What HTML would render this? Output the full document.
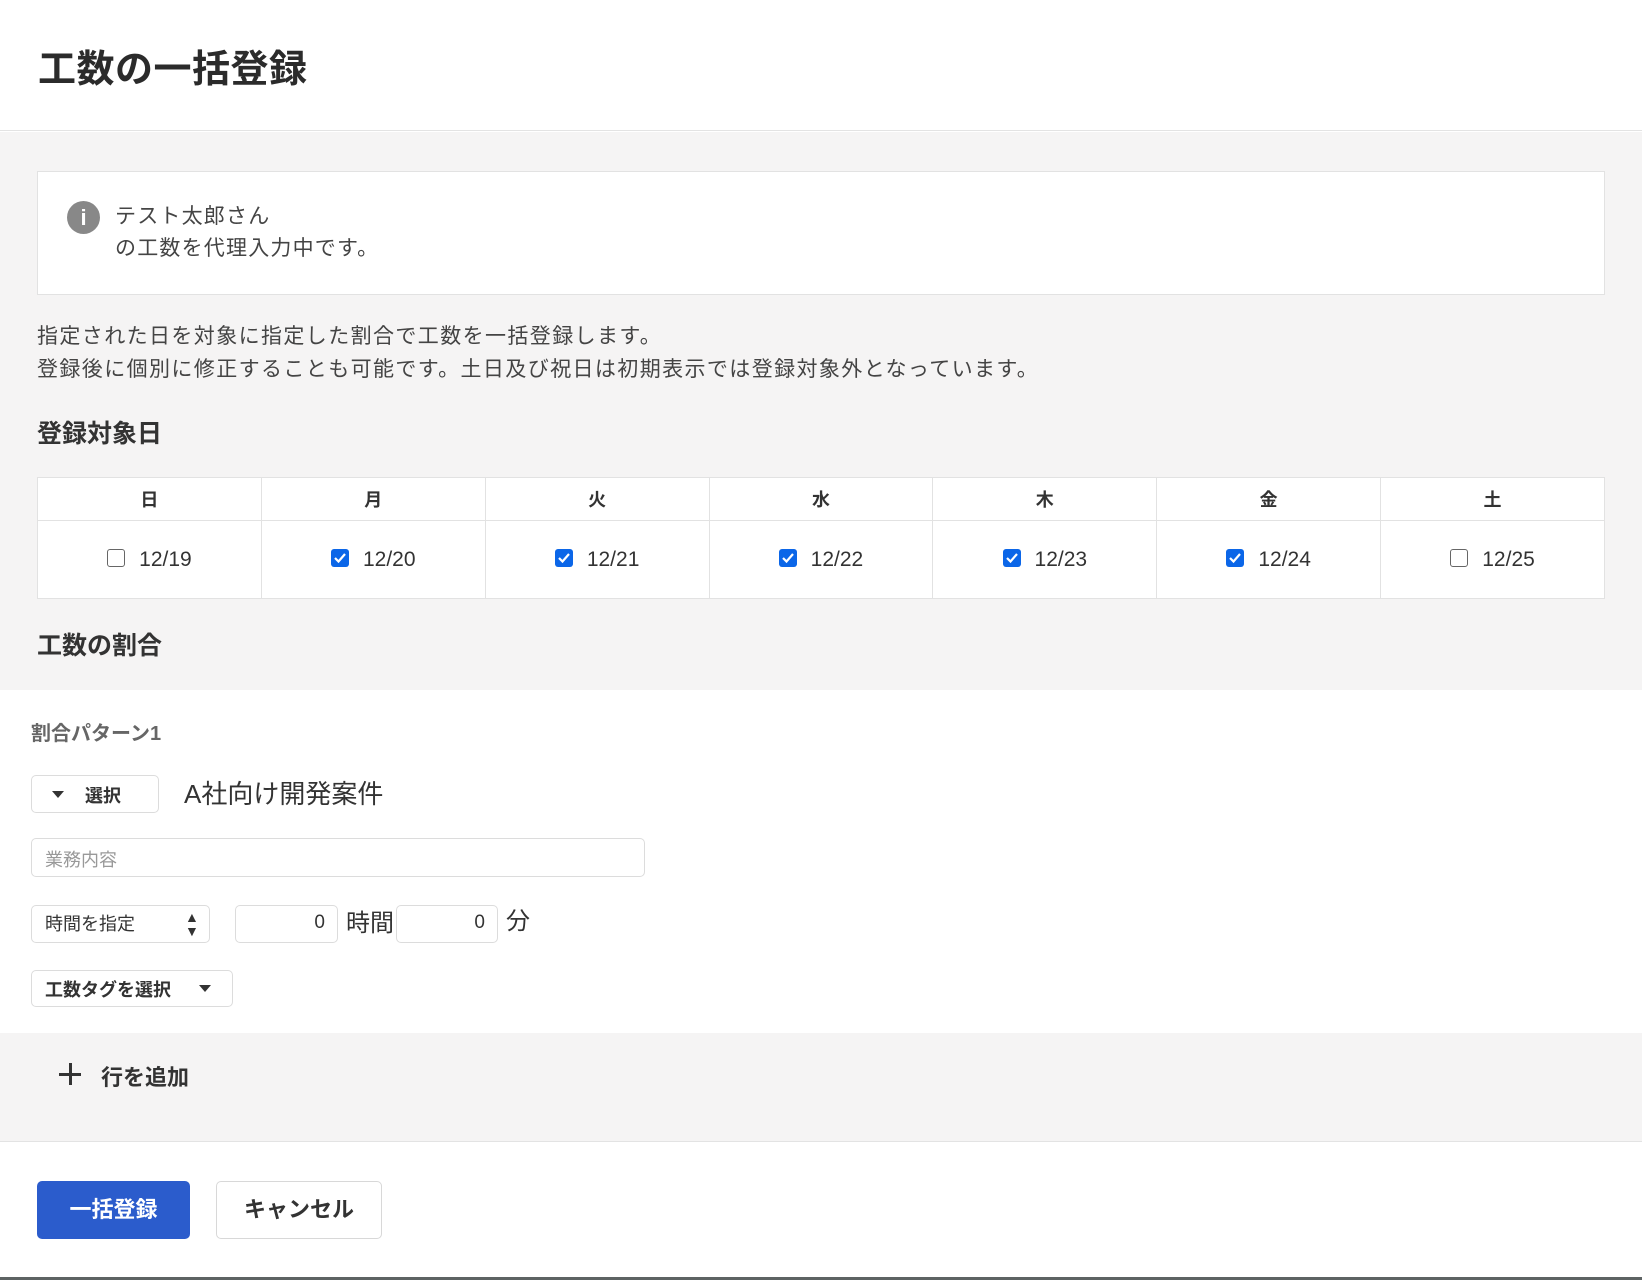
<!DOCTYPE html>
<html><head><meta charset="utf-8"><style>
*{box-sizing:border-box;margin:0;padding:0}
body{width:1642px;height:1280px;overflow:hidden;font-family:"Liberation Sans","Noto Sans CJK JP",sans-serif;color:#333;background:#fff;position:relative}
.abs{position:absolute}
.hdr{left:0;top:0;width:1642px;height:131px;background:#fff;border-bottom:1px solid #e3e3e3}
.gray{background:#f5f4f4}
.box{background:#fff;border:1px solid #e2e2e2}
.b{font-weight:bold}
table{border-collapse:collapse;background:#fff}
td,th{border:1px solid #e2e2e2;text-align:center}
.cb{display:inline-block;width:18px;height:18px;border-radius:3px;vertical-align:middle;margin-right:14px;position:relative;top:-2px}
.cb.off{border:1.5px solid #666;background:#fff}
.cb.on{background:#0b66e8}
.cb.on svg{position:absolute;left:2px;top:2px}
.in{background:#fff;border:1px solid #dcdcdc;border-radius:5px}
</style></head><body>
<div class="abs hdr"></div>
<div class="abs b" style="left:38px;top:38px;font-size:38px;color:#2b2b2b;letter-spacing:0.5px">工数の一括登録</div>
<div class="abs gray" style="left:0;top:132px;width:1642px;height:558px"></div>
<div class="abs box" style="left:37px;top:171px;width:1568px;height:124px"></div>
<div class="abs" style="left:67px;top:201px;width:33px;height:33px;border-radius:50%;background:#888;color:#fff;font-weight:bold;font-size:22px;text-align:center;line-height:33px;font-family:'Liberation Sans',sans-serif">i</div>
<div class="abs" style="left:115px;top:201px;font-size:21px;line-height:32px;color:#444;letter-spacing:1.2px">テスト太郎さん<br>の工数を代理入力中です。</div>
<div class="abs" style="left:37px;top:320px;font-size:21px;line-height:33px;color:#444;letter-spacing:1.4px">指定された日を対象に指定した割合で工数を一括登録します。<br>登録後に個別に修正することも可能です。土日及び祝日は初期表示では登録対象外となっています。</div>
<div class="abs b" style="left:37px;top:414px;font-size:25px;color:#333">登録対象日</div>
<table class="abs" style="left:37px;top:477px;width:1568px">
<tr style="height:43px;font-size:18px"><th>日</th><th>月</th><th>火</th><th>水</th><th>木</th><th>金</th><th>土</th></tr>
<tr style="height:78px;font-size:21px;color:#333">
<td><span class="cb off"></span>12/19</td>
<td><span class="cb on"><svg width="14" height="14" viewBox="0 0 14 14"><path d="M2 7l3.5 3.5L12 3" stroke="#fff" stroke-width="2.2" fill="none"/></svg></span>12/20</td>
<td><span class="cb on"><svg width="14" height="14" viewBox="0 0 14 14"><path d="M2 7l3.5 3.5L12 3" stroke="#fff" stroke-width="2.2" fill="none"/></svg></span>12/21</td>
<td><span class="cb on"><svg width="14" height="14" viewBox="0 0 14 14"><path d="M2 7l3.5 3.5L12 3" stroke="#fff" stroke-width="2.2" fill="none"/></svg></span>12/22</td>
<td><span class="cb on"><svg width="14" height="14" viewBox="0 0 14 14"><path d="M2 7l3.5 3.5L12 3" stroke="#fff" stroke-width="2.2" fill="none"/></svg></span>12/23</td>
<td><span class="cb on"><svg width="14" height="14" viewBox="0 0 14 14"><path d="M2 7l3.5 3.5L12 3" stroke="#fff" stroke-width="2.2" fill="none"/></svg></span>12/24</td>
<td><span class="cb off"></span>12/25</td>
</tr></table>
<div class="abs b" style="left:37px;top:626px;font-size:25px;color:#333">工数の割合</div>
<div class="abs b" style="left:31px;top:717px;font-size:20px;color:#666">割合パターン1</div>
<div class="abs in" style="left:31px;top:775px;width:128px;height:38px"></div>
<div class="abs" style="left:52px;top:791px;width:0;height:0;border-left:6px solid transparent;border-right:6px solid transparent;border-top:7px solid #333"></div>
<div class="abs b" style="left:85px;top:782px;font-size:18px">選択</div>
<div class="abs" style="left:184px;top:774px;font-size:26px;color:#333">A社向け開発案件</div>
<div class="abs in" style="left:31px;top:838px;width:614px;height:39px"></div>
<div class="abs" style="left:45px;top:846px;font-size:18px;color:#999">業務内容</div>
<div class="abs in" style="left:31px;top:905px;width:179px;height:38px"></div>
<div class="abs" style="left:45px;top:910px;font-size:18px">時間を指定</div>
<div class="abs" style="left:185px;top:910px;font-size:14px;line-height:14px">▲<br>▼</div>
<div class="abs in" style="left:235px;top:905px;width:103px;height:38px"></div>
<div class="abs" style="left:300px;top:912px;width:25px;text-align:right;font-size:19px">0</div>
<div class="abs" style="left:346px;top:903px;font-size:24px">時間</div>
<div class="abs in" style="left:396px;top:905px;width:102px;height:38px"></div>
<div class="abs" style="left:460px;top:912px;width:25px;text-align:right;font-size:19px">0</div>
<div class="abs" style="left:506px;top:901px;font-size:24px">分</div>
<div class="abs in" style="left:31px;top:970px;width:202px;height:37px"></div>
<div class="abs b" style="left:45px;top:976px;font-size:18px">工数タグを選択</div>
<div class="abs" style="left:199px;top:985px;width:0;height:0;border-left:6px solid transparent;border-right:6px solid transparent;border-top:7px solid #333"></div>
<div class="abs gray" style="left:0;top:1033px;width:1642px;height:109px;border-bottom:1px solid #e3e3e3"></div>
<div class="abs" style="left:59px;top:1073px;width:22px;height:3px;background:#333"></div>
<div class="abs" style="left:68.5px;top:1063px;width:3px;height:22px;background:#333"></div>
<div class="abs b" style="left:101px;top:1060px;font-size:22px">行を追加</div>
<div class="abs b" style="left:37px;top:1181px;width:153px;height:58px;background:#2b5ccc;border-radius:5px;color:#fff;font-size:22px;text-align:center;line-height:58px">一括登録</div>
<div class="abs b" style="left:216px;top:1181px;width:166px;height:58px;background:#fff;border:1px solid #d8d8d8;border-radius:5px;color:#333;font-size:22px;text-align:center;line-height:56px">キャンセル</div>
<div class="abs" style="left:0;top:1277px;width:1642px;height:3px;background:#5d6363"></div>
</body></html>
